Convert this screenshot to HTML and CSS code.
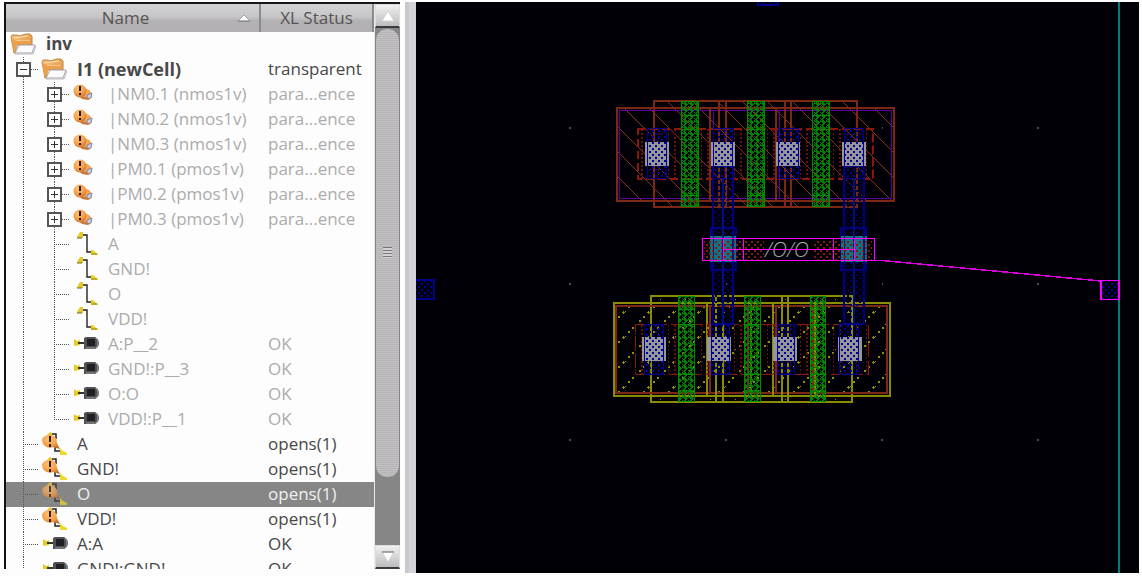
FILE: index.html
```html
<!DOCTYPE html>
<html lang="en">
<head>
<meta charset="utf-8">
<title>Layout navigator</title>
<link rel="stylesheet" href="styles.css">
</head>
<body>
<svg class="symbols" width="0" height="0" aria-hidden="true">
  <defs>
    <linearGradient id="tan" x1="0" y1="0" x2="1" y2="1"><stop offset="0" stop-color="#f7c47e"/><stop offset="1" stop-color="#dd8b38"/></linearGradient>
    <radialGradient id="ball" cx=".4" cy=".3" r=".8"><stop offset="0" stop-color="#ffc37c"/><stop offset=".6" stop-color="#f39b45"/><stop offset="1" stop-color="#b5631f"/></radialGradient>
    <symbol id="folder" viewBox="0 0 32 25">
      <path d="M4 5l1-2h5l2 1 7-2h4l2 2v9H9v8H7z" fill="url(#tan)" stroke="#c18440"/>
      <path d="M7 6l14-2M8 9h15" stroke="#ffe3b5" fill="none"/>
      <path d="M4 6l3 15 4-9h13V9H10z" fill="#eba04e"/>
      <path d="M12 13h16l-3 8H8z" fill="#fbfbfd" stroke="#a5a3ad"/>
      <path d="M8 22h18l3-8" fill="none" stroke="#bcbac2"/>
    </symbol>
    <symbol id="param" viewBox="0 0 32 25">
      <circle cx="17" cy="12" r="5" fill="url(#ball)"/>
      <circle cx="11" cy="9" r="6.500" fill="url(#ball)"/>
      <path d="M18 13l5-2-1 5-4 1z" fill="#c9cde1" stroke="#8386a3"/>
      <path d="M11 15h6l4 2-2 1-6-1z" fill="#c9793a"/>
      <path d="M11 4v5M11 11v2" stroke="#241a0c" stroke-width="2"/>
    </symbol>
    <symbol id="net" viewBox="0 0 32 25">
      <path d="M13 3h5v17h6" fill="none" stroke="#222" stroke-width="1.400"/>
      <path d="M8 5l3-5h3v6H8z" fill="#e2c92c"/><path d="M8 6h5" stroke="#77681a"/>
      <path d="M22 22v-4h2l2 2 3 2v1h-7z" fill="#e9cf27"/><path d="M22 22h6" stroke="#99851d"/>
    </symbol>
    <symbol id="pin" viewBox="0 0 32 25">
      <path d="M5 14V7l3 2 3-1v5z" fill="#e6cb28"/>
      <path d="M9 11h7" stroke="#333" stroke-width="2"/>
      <path d="M15 6l2-1h9q4 2 4 6t-4 6H15z" fill="#505055"/>
      <path d="M18 7h8v7h-8z" fill="#202023"/>
      <path d="M27 6q4 5 0 10M17 16h9" fill="none" stroke="#96969b"/>
    </symbol>
    <symbol id="warn" viewBox="0 0 32 25">
      <path d="M11 2h7v5M17 15v4h7" fill="none" stroke="#222" stroke-width="1.500"/>
      <path d="M9 3l3-3 2 1v3H9z" fill="#e4cc31"/>
      <path d="M4 7q4-5 10-4 5 2 5 8 1 3 3 6l-7-2q-4 2-8-1-3-2-3-7z" fill="url(#ball)"/>
      <path d="M12 4v6M12 12v3" stroke="#30200d" stroke-width="2"/>
      <path d="M22 21v-5l3 3 4 2v2h-7z" fill="#f0d827"/>
    </symbol>
  </defs>
</svg>

<main class="app">
  <section class="navigator" aria-label="Navigator">
    <div class="tree">
      <table>
        <colgroup><col class="col-name"><col></colgroup>
        <thead>
          <tr>
            <th><button class="head">Name<svg class="sort" viewBox="0 0 14 8" aria-hidden="true"><path d="M1 7L7 1l6 6"/><path class="base" d="M1 7h12"/></svg></button></th>
            <th><button class="head">XL Status</button></th>
          </tr>
        </thead>
        <tbody>
          <tr class="bold"><td><div class="item"><svg class="icon"><use href="#folder"/></svg>inv</div></td><td></td></tr>
          <tr><td><div class="item bold"><span class="rail branch"><button class="toggle open" aria-label="Collapse I1"></button></span><svg class="icon"><use href="#folder"/></svg>I1 (newCell)</div></td><td>transparent</td></tr>
          <tr class="dim"><td><div class="item"><span class="rail"></span><span class="rail branch"><button class="toggle" aria-label="Expand NM0.1"></button></span><svg class="icon"><use href="#param"/></svg>|NM0.1 (nmos1v)</div></td><td>para...ence</td></tr>
          <tr class="dim"><td><div class="item"><span class="rail"></span><span class="rail branch"><button class="toggle" aria-label="Expand NM0.2"></button></span><svg class="icon"><use href="#param"/></svg>|NM0.2 (nmos1v)</div></td><td>para...ence</td></tr>
          <tr class="dim"><td><div class="item"><span class="rail"></span><span class="rail branch"><button class="toggle" aria-label="Expand NM0.3"></button></span><svg class="icon"><use href="#param"/></svg>|NM0.3 (nmos1v)</div></td><td>para...ence</td></tr>
          <tr class="dim"><td><div class="item"><span class="rail"></span><span class="rail branch"><button class="toggle" aria-label="Expand PM0.1"></button></span><svg class="icon"><use href="#param"/></svg>|PM0.1 (pmos1v)</div></td><td>para...ence</td></tr>
          <tr class="dim"><td><div class="item"><span class="rail"></span><span class="rail branch"><button class="toggle" aria-label="Expand PM0.2"></button></span><svg class="icon"><use href="#param"/></svg>|PM0.2 (pmos1v)</div></td><td>para...ence</td></tr>
          <tr class="dim"><td><div class="item"><span class="rail"></span><span class="rail branch"><button class="toggle" aria-label="Expand PM0.3"></button></span><svg class="icon"><use href="#param"/></svg>|PM0.3 (pmos1v)</div></td><td>para...ence</td></tr>
          <tr class="dim"><td><div class="item"><span class="rail"></span><span class="rail branch"></span><svg class="icon"><use href="#net"/></svg>A</div></td><td></td></tr>
          <tr class="dim"><td><div class="item"><span class="rail"></span><span class="rail branch"></span><svg class="icon"><use href="#net"/></svg>GND!</div></td><td></td></tr>
          <tr class="dim"><td><div class="item"><span class="rail"></span><span class="rail branch"></span><svg class="icon"><use href="#net"/></svg>O</div></td><td></td></tr>
          <tr class="dim"><td><div class="item"><span class="rail"></span><span class="rail branch"></span><svg class="icon"><use href="#net"/></svg>VDD!</div></td><td></td></tr>
          <tr class="dim"><td><div class="item"><span class="rail"></span><span class="rail branch"></span><svg class="icon"><use href="#pin"/></svg>A:P__2</div></td><td>OK</td></tr>
          <tr class="dim"><td><div class="item"><span class="rail"></span><span class="rail branch"></span><svg class="icon"><use href="#pin"/></svg>GND!:P__3</div></td><td>OK</td></tr>
          <tr class="dim"><td><div class="item"><span class="rail"></span><span class="rail branch"></span><svg class="icon"><use href="#pin"/></svg>O:O</div></td><td>OK</td></tr>
          <tr class="dim"><td><div class="item"><span class="rail"></span><span class="rail branch last"></span><svg class="icon"><use href="#pin"/></svg>VDD!:P__1</div></td><td>OK</td></tr>
          <tr><td><div class="item"><span class="rail branch"></span><svg class="icon"><use href="#warn"/></svg>A</div></td><td>opens(1)</td></tr>
          <tr><td><div class="item"><span class="rail branch"></span><svg class="icon"><use href="#warn"/></svg>GND!</div></td><td>opens(1)</td></tr>
          <tr class="selected"><td><div class="item"><span class="rail branch"></span><svg class="icon"><use href="#warn"/></svg>O</div></td><td>opens(1)</td></tr>
          <tr><td><div class="item"><span class="rail branch"></span><svg class="icon"><use href="#warn"/></svg>VDD!</div></td><td>opens(1)</td></tr>
          <tr><td><div class="item"><span class="rail branch"></span><svg class="icon"><use href="#pin"/></svg>A:A</div></td><td>OK</td></tr>
          <tr><td><div class="item"><span class="rail branch"></span><svg class="icon"><use href="#pin"/></svg>GND!:GND!</div></td><td>OK</td></tr>
        </tbody>
      </table>
    </div>
    <div class="scrollbar">
      <button class="arrow" aria-label="Scroll up"><svg viewBox="0 0 14 12"><path d="M1 11L7 1l6 10z"/></svg></button>
      <div class="track"><div class="thumb"><span class="grip"></span></div></div>
      <button class="arrow down" aria-label="Scroll down"><svg viewBox="0 0 14 12"><path d="M1 1h12L7 11z"/><path class="bar" d="M1 1h12"/></svg></button>
    </div>
  </section>
  <div class="splitter"></div>
  <section class="canvas" aria-label="Layout canvas">
    <svg class="layout" viewBox="416 2 723 571" preserveAspectRatio="xMinYMin slice" shape-rendering="crispEdges">
      <defs>
        <pattern id="hatchN" width="25" height="25" patternUnits="userSpaceOnUse"><path d="M-1 8L17 26M15 -1L26 10" stroke="#84301a" stroke-width="1.300" fill="none"/></pattern>
        <pattern id="hatchP" width="25" height="25" patternUnits="userSpaceOnUse"><path d="M-1 12L12 -1M10 26L26 10" stroke="#929200" stroke-width="1.500" stroke-dasharray="2 4" fill="none"/></pattern>
        <pattern id="blueDots" width="6" height="6" patternUnits="userSpaceOnUse"><path d="M1 1h2v2h-2zM4 4h2v2h-2z" fill="#0000a0"/></pattern>
        <pattern id="blueDim" width="6" height="6" patternUnits="userSpaceOnUse"><path d="M1 1h2v2h-2zM4 4h2v2h-2z" fill="#00005c"/></pattern>
        <pattern id="redDots" width="6" height="6" patternUnits="userSpaceOnUse"><path d="M1 1h2v2h-2zM4 4h2v2h-2z" fill="#80180c"/></pattern>
        <pattern id="redSparse" width="33" height="4" patternUnits="userSpaceOnUse"><path d="M8 1h1v2h-1zM14 1h2v2h-2zM31 1h1v2h-1z" fill="#66140a"/></pattern>
        <pattern id="weave" width="6" height="6" patternUnits="userSpaceOnUse"><path d="M0 0h2v1h1v1h1v1h-1v1h-1v1h-1v1h-1v-2h1v-1h-1zM4 0h1v1h1v1h-2zM4 4h1v1h1v1h-1z" fill="#008000"/></pattern>
      </defs>

      <g fill="#4c4c4c">
        <path d="M569 127h2v2h-2zM882 127h1v2h-1zM1037 127h2v2h-2zM569 283h2v2h-2zM726 283h1v2h-1zM882 283h1v2h-1zM1037 283h2v2h-2zM569 439h2v2h-2zM725 439h2v2h-2zM881 439h2v2h-2zM1037 439h2v2h-2z"/>
      </g>
      <path d="M1119 2v571" stroke="#008078" stroke-width="2"/>

      <g fill="url(#blueDots)" stroke="#00008e" stroke-width="1.500">
        <path d="M758 0h20v5h-20z"/><path d="M414 280h20v19h-20z"/>
      </g>

      <g fill="none">
        <path d="M617 108h277v93H617z" fill="url(#hatchN)" stroke="#7d2815" stroke-width="2"/>
        <path d="M654 101h203v106H654z" fill="url(#hatchN)" stroke="#7d2815" stroke-width="1.500"/>
        <path d="M619.500 110.500h272v88h-272z" stroke="#5e00a0" stroke-width="1.500"/>
        <path d="M713 111v87M751 111v87M779 111v87M816 111v87" stroke="#5e00a0"/>
        <path d="M710 107v94M776 107v94M719 101v106M726 101v106M785 101v106M791 101v106" stroke="#7d2815" stroke-width="1.500"/>
        <path d="M638 129h235v50H638z" fill="url(#redSparse)" stroke="#8c1608" stroke-width="1.500" stroke-dasharray="8 4"/>
        <g fill="url(#weave)" stroke="#008c00">
          <path d="M681.500 101.500h17v105h-17zM747.500 101.500h17v105h-17zM812.500 101.500h17v105h-17z"/>
          <path d="M681 115h18M681 129h18M681 179h18M681 195h18M747 115h18M747 129h18M747 179h18M747 195h18M812 115h18M812 129h18M812 179h18M812 195h18"/>
        </g>
      </g>

      <g fill="none">
        <path d="M614 303h276v93H614z" fill="url(#hatchP)" stroke="#8c8c00" stroke-width="1.500"/>
        <path d="M651 296h201v106H651z" fill="url(#hatchP)" stroke="#8c8c00" stroke-width="1.500"/>
        <path d="M616 306h271v87H616zM710 306v87M748 306v87M776 306v87M813 306v87" stroke="#7d2815" stroke-width="1.500"/>
        <path d="M707 302v94M773 302v94M716 296v106M723 296v106M782 296v106M788 296v106M751 302v94M815 302v94" stroke="#8c8c00" stroke-width="1.500"/>
        <path d="M635 324h233v50H635z" fill="url(#redSparse)" stroke="#8c1608" stroke-dasharray="14 4"/>
        <g fill="url(#weave)" stroke="#008c00">
          <path d="M678.500 296.500h16v105h-16zM744.500 296.500h16v105h-16zM810.500 296.500h15v105h-15z"/>
          <path d="M678 309h17M678 324h17M678 374h17M678 390h17M744 309h17M744 324h17M744 374h17M744 390h17M810 309h15M810 324h15M810 374h15M810 390h15"/>
        </g>
      </g>

      <g fill="url(#blueDim)" stroke="#00007c" stroke-width="1.500">
        <path d="M713 166h20v158h-20zM844 166h20v158h-20z"/>
        <path d="M711 228h25v42h-25zM841 228h25v42h-25z"/>
      </g>
      <path d="M645 142h24v24h-24zM711 142h24v24h-24zM776 142h24v24h-24zM842 142h24v24h-24zM642 337h24v24h-24zM707 337h24v24h-24zM773 337h24v24h-24zM838 337h24v24h-24z" fill="#969696"/>
      <g fill="url(#blueDots)" stroke="#000091" stroke-width="1.500">
        <path d="M647.500 128.500h19v50h-19zM713.500 128.500h19v50h-19zM778.500 128.500h20v50h-20zM844.500 128.500h19v50h-19z"/>
        <path d="M644.500 324.500h19v50h-19zM711.500 324.500h18v50h-18zM777.500 324.500h17v50h-17zM839.500 324.500h19v50h-19z"/>
      </g>

      <path d="M710 236h26v26h-26zM841 236h26v26h-26z" fill="#147184"/>
      <path d="M713.500 236v26M733 236v26M844.500 236v26M864 236v26M723 179v145M854 179v145" stroke="#000e80" stroke-width="1.500"/>
      <path d="M704 240h60v20h-60zM813 240h59v20h-59z" fill="url(#redDots)"/>
      <text class="net-name" x="765" y="257">/O/O</text>
      <g fill="none" stroke="#f0f">
        <path d="M702.500 238.500h172v22h-172zM723.500 238v22M743.500 238v22M833.500 238v22M854.500 238v22M723 249.500h131"/>
        <path d="M874 260.500h8L1101 281" stroke="#d900d9" stroke-width="1.500"/>
        <path d="M1101 280.500h18v19h-18z" fill="url(#blueDots)" stroke-width="1.500"/>
      </g>
    </svg>
  </section>
</main>
</body>
</html>
```

FILE: styles.css
```css
* { box-sizing: border-box; }

body {
  margin: 0;
  background: #fdfdfd;
  color: #484848;
  font-family: "Open Sans", "Noto Sans", sans-serif;
  font-size: 17px;
  line-height: 24px;
}

button { font: inherit; color: inherit; margin: 0; padding: 0; border: 0; }

.symbols { position: absolute; }

.app {
  display: flex;
  height: 100vh;
  padding: 2px 3px 3px 4px;
}

.navigator {
  display: flex;
  flex: none;
  width: 396px;
  margin-bottom: 4px;
  border-left: 2px solid #111;
  border-top: 2px solid #16161c;
}

.tree { flex: 1; overflow: hidden; }

table {
  width: 100%;
  table-layout: fixed;
  border-collapse: collapse;
}

.col-name { width: 255px; }

th { padding: 0; font-weight: normal; }

.head {
  display: flex;
  align-items: center;
  justify-content: center;
  width: 100%;
  height: 28px;
  background: linear-gradient(#d3d2d4, #c6c5c8 45%, #b3b1b4 60%, #b3b1b4);
  border-right: 2px solid #8a898c;
  color: #555;
}

.sort {
  width: 14px;
  height: 8px;
  margin-left: 88px;
  margin-right: -88px;
  fill: #fff;
  stroke: #a5a4a7;
}

.sort .base { stroke: #666; }

td {
  height: 25px;
  padding: 0 0 0 7px;
  white-space: nowrap;
  vertical-align: top;
}

td:first-child { padding: 0 0 0 1px; }

.item { display: flex; height: 25px; }

.bold { font-weight: bold; }
.item.bold { font-size: 18px; }
.dim { color: #acacac; }
.selected { background: #868686; color: #f0f0f0; }

.rail {
  display: flex;
  align-items: center;
  width: 31px;
  padding-left: 9px;
  background: repeating-linear-gradient(#555 0 1px, transparent 1px 2px) 16px 0 / 1px 100% no-repeat;
}

.branch {
  background:
    repeating-linear-gradient(#555 0 1px, transparent 1px 2px) 16px 0 / 1px 100% no-repeat,
    repeating-linear-gradient(90deg, #555 0 1px, transparent 1px 2px) 18px 12px / 13px 1px no-repeat;
}

.last { background-size: 1px 13px, 13px 1px; }

.toggle {
  width: 15px;
  height: 15px;
  border: 2px solid #555;
  background:
    linear-gradient(#333, #333) center / 7px 1px no-repeat,
    linear-gradient(#333, #333) center / 1px 7px no-repeat,
    #fff;
}

.toggle.open { background: linear-gradient(#333, #333) center / 7px 1px no-repeat, #fff; }

.icon { width: 32px; height: 25px; margin-right: 7px; flex: none; }

.selected .icon { opacity: 0.7; }

.scrollbar {
  display: flex;
  flex-direction: column;
  flex: none;
  width: 26px;
  border-left: 1px solid #e8e8e8;
  background: #868686;
}

.arrow {
  display: flex;
  align-items: center;
  justify-content: center;
  height: 24px;
  background: linear-gradient(#f0f0f0, #bdbbbd);
  border: 1px solid #ddd;
  border-bottom: 2px solid #3b3b3f;
}

.arrow svg { width: 14px; height: 12px; fill: #fff; stroke: #d4d2d4; }
.arrow .bar { stroke: #666; }

.track { flex: 1; }

.thumb {
  display: flex;
  align-items: center;
  justify-content: center;
  height: 87%;
  border: 1px solid #858386;
  border-radius: 12px;
  background: repeating-linear-gradient(#c1bfc2 0 1px, #b7b5b8 1px 2px);
}

.grip {
  width: 9px;
  height: 11px;
  background: repeating-linear-gradient(#777 0 1px, #d4d2d4 1px 3px);
}

.splitter {
  flex: none;
  width: 11px;
  margin-left: 5px;
  background: linear-gradient(90deg, #cac8cc 40%, #d5d2da 40%);
}

.canvas {
  flex: 1;
  min-width: 0;
  background: #000006;
  overflow: hidden;
}

.layout { display: block; width: 100%; height: 100%; }

.net-name {
  font-family: "Open Sans", sans-serif;
  font-size: 21px;
  font-style: italic;
  font-weight: 300;
  fill: #a5aaa5;
}
```
